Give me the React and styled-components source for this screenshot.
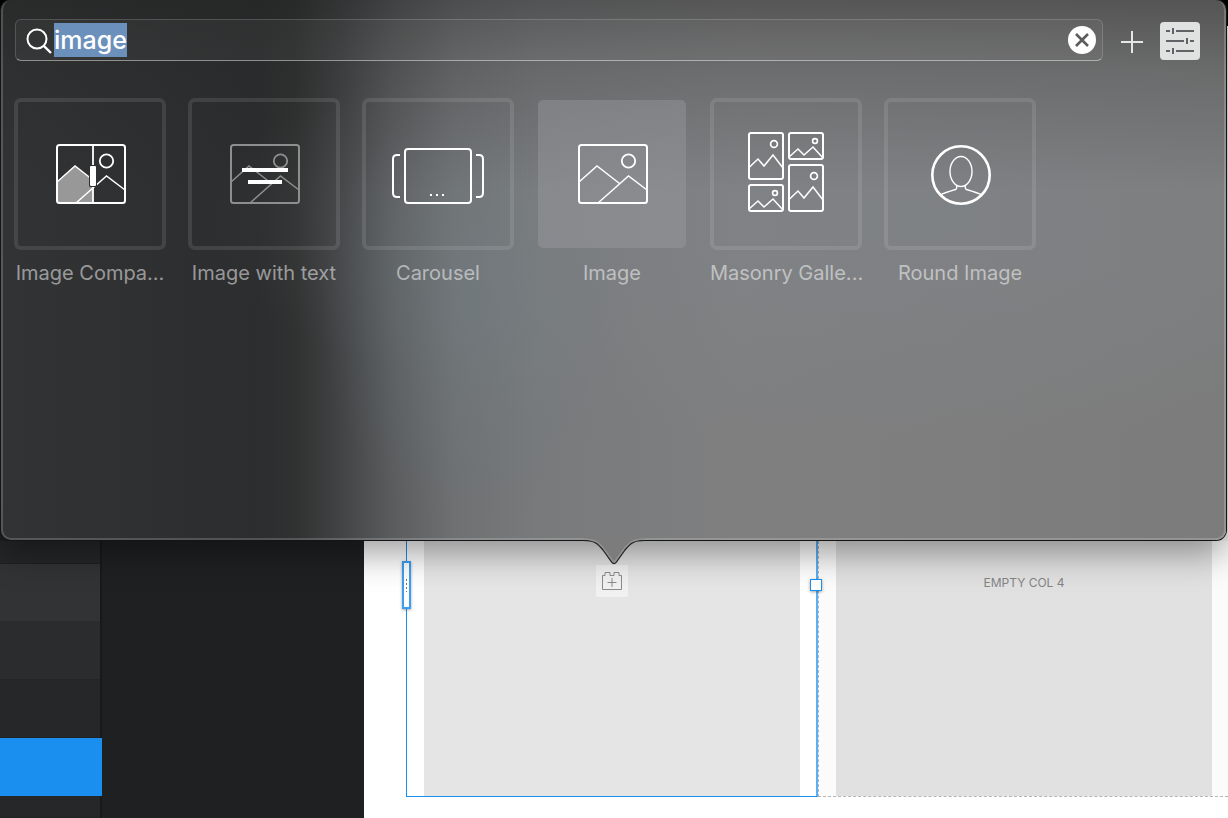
import React, { useEffect, useRef, useState } from "react";
import styled, { createGlobalStyle, css } from "styled-components";

const elements = [
  { id: "compare", label: "Image Compa...", icon: CompareIcon },
  { id: "text", label: "Image with text", icon: TextImageIcon },
  { id: "carousel", label: "Carousel", icon: CarouselIcon },
  { id: "image", label: "Image", icon: ImageIcon },
  { id: "masonry", label: "Masonry Galle...", icon: MasonryIcon },
  { id: "round", label: "Round Image", icon: RoundIcon },
];

function App() {
  const [query, setQuery] = useState("image");
  const [active, setActive] = useState("image");
  const input = useRef(null);

  // start with the query selected so typing replaces it
  useEffect(() => {
    input.current.focus();
    input.current.select();
  }, []);

  return (
    <Page>
      <GlobalStyle />
      <Popover>
        <Toolbar>
          <SearchBox>
            <SearchIcon />
            <SearchInput
              ref={input}
              type="text"
              aria-label="Search elements"
              value={query}
              onChange={(e) => setQuery(e.target.value)}
            />
            <ClearButton type="button" aria-label="Clear search" onClick={() => setQuery("")}>
              <svg width="14" height="14" viewBox="0 0 14 14" fill="none" stroke="#5c5c5c" strokeWidth="2.6">
                <path d="M1 1 L13 13 M13 1 L1 13" />
              </svg>
            </ClearButton>
          </SearchBox>
          <AddButton type="button" aria-label="Add element">
            <svg width="22" height="22" viewBox="0 0 22 22" fill="none" stroke="#e6e6e6" strokeWidth="2">
              <path d="M11 0 V22 M0 11 H22" />
            </svg>
          </AddButton>
          <SettingsButton type="button" aria-label="Settings">
            <SlidersIcon />
          </SettingsButton>
        </Toolbar>

        <ElementGrid>
          {elements.map(({ id, label, icon: Icon }) => (
            <ElementButton key={id} type="button" onClick={() => setActive(id)}>
              <Tile $active={active === id}>
                <Icon />
              </Tile>
              <Label>{label}</Label>
            </ElementButton>
          ))}
        </ElementGrid>

        <Pointer width="62" height="28" viewBox="0 0 62 28">
          <path d="M0 0 H62 V2 C50 2 47 6 42 12 L34 24 Q31 27 28 24 L20 12 C15 6 12 2 0 2 Z" fill="#7c7c7c" />
          <path d="M0 1 C13 1 16 5 21 11 L29 22 Q31 25 33 22 L41 11 C46 5 49 1 62 1" fill="none" stroke="#929391" strokeWidth="1.5" />
          <path d="M0 2.5 C12 2.5 15 6 20 12 L28.5 24 Q31 27.5 33.5 24 L42 12 C47 6 50 2.5 62 2.5" fill="none" stroke="#222" strokeWidth="1.2" />
        </Pointer>
      </Popover>

      <Workspace>
        <Sidebar>
          <SideRow $size="short" $tone="#252628" />
          <SideRow $tone="#323335" />
          <SideRow $tone="#2b2c2e" />
          <SideRow $tone="#262729" />
          <SideRow $tone="#1b8ff0" $selected />
          <SideRow $size="rest" $tone="#262729" />
        </Sidebar>
        <Inspector />
        <Canvas>
          <SelectedColumn>
            <DragHandle />
            <ColumnBody>
              <BrickButton type="button" aria-label="Add element to column">
                <BrickIcon />
              </BrickButton>
            </ColumnBody>
            <ResizeHandle />
          </SelectedColumn>
          <EmptyColumn>
            <ColumnBody $empty>
              <EmptyText>EMPTY COL 4</EmptyText>
            </ColumnBody>
          </EmptyColumn>
        </Canvas>
      </Workspace>
    </Page>
  );
}

// Icons
function SearchIcon() {
  return (
    <svg width="29" height="28" viewBox="0 -1 29 28" fill="none" stroke="#fff" strokeWidth="2">
      <circle cx="12" cy="12" r="9.5" />
      <path d="M18.8 18.8 L26 26" strokeWidth="2.4" />
    </svg>
  );
}

function SlidersIcon() {
  return (
    <svg width="28" height="26" viewBox="0 0 28 26" fill="none" stroke="#606365" strokeWidth="2">
      <path d="M0 3 H4 M7 0 V6 M10 3 H28" />
      <path d="M0 13 H18 M21 10 V16 M24 13 H28" />
      <path d="M0 23 H4 M7 20 V26 M10 23 H28" />
    </svg>
  );
}

function Landscape() {
  return (
    <>
      <rect x="1" y="1" width="68" height="58" rx="2.5" strokeWidth="2" />
      <circle cx="50.5" cy="17" r="6.7" strokeWidth="1.8" />
      <path d="M1 38 L19 22 L41.5 39.5 M20 59 L50.5 32 L69 46" strokeWidth="1.5" />
    </>
  );
}

function ImageIcon() {
  return (
    <svg width="72" height="60" viewBox="-2 0 72 60" fill="none" stroke="#fff">
      <Landscape />
    </svg>
  );
}

function CompareIcon() {
  return (
    <svg width="72" height="60" viewBox="-2 0 72 60" fill="none" stroke="#fff">
      <path d="M1 38 L19 22 L37 36 V59 H1 Z" fill="#989898" stroke="none" />
      <rect x="1" y="1" width="68" height="58" rx="2.5" strokeWidth="2" />
      <circle cx="50.5" cy="17" r="6.7" strokeWidth="1.8" />
      <path d="M1 38 L19 22 L37 36 M20 59 L50.5 32 L69 46" strokeWidth="1.5" />
      <path d="M37 1 V59" strokeWidth="1.8" />
      <rect x="33" y="21" width="8" height="22" rx="1.5" fill="#2f3031" stroke="none" />
      <rect x="34" y="22" width="6" height="20" rx="1" fill="#fff" stroke="none" />
    </svg>
  );
}

function TextImageIcon() {
  return (
    <svg width="72" height="60" viewBox="-2 0 72 60" fill="none">
      <g stroke="#8e8e8f">
        <Landscape />
      </g>
      <path d="M12 26 H58 M18 38 H52" stroke="#fff" strokeWidth="4" />
    </svg>
  );
}

function CarouselIcon() {
  return (
    <svg width="92" height="60" viewBox="0 -4 92 60" fill="none" stroke="#fff" strokeWidth="2">
      <rect x="13" y="1" width="66" height="54" rx="3" />
      <path d="M8 7 H5 Q1 7 1 11 V45 Q1 49 5 49 H8 M84 7 H87 Q91 7 91 11 V45 Q91 49 87 49 H84" />
      <path d="M38 47 H40 M44 47 H46 M50 47 H52" />
    </svg>
  );
}

function MasonryIcon() {
  return (
    <svg width="76" height="84" viewBox="0 0 76 84" fill="none" stroke="#fff" strokeWidth="2">
      <rect x="1" y="1" width="34" height="46" rx="2" />
      <rect x="41" y="1" width="34" height="26" rx="2" />
      <rect x="41" y="33" width="34" height="46" rx="2" />
      <rect x="1" y="53" width="34" height="26" rx="2" />
      <g strokeWidth="1.7">
        <circle cx="26" cy="12" r="3.4" />
        <circle cx="67" cy="9" r="2.4" />
        <circle cx="66" cy="44" r="3.4" />
        <circle cx="27" cy="61" r="2.4" />
      </g>
      <g strokeWidth="1.5">
        <path d="M1 35.5 L10 27 L16 34 L25 23 L35 36" />
        <path d="M41 25 L50 17 L56 23 L65 15 L75 26" />
        <path d="M41 67.5 L50 59 L56 66 L65 55 L75 68" />
        <path d="M1 77 L10 69 L16 75 L25 67 L35 78" />
      </g>
    </svg>
  );
}

function RoundIcon() {
  return (
    <svg width="62" height="62" viewBox="-2 -2 62 62" fill="none" stroke="#fff">
      <circle cx="30" cy="30" r="28.7" strokeWidth="2.6" />
      <ellipse cx="30" cy="26.5" rx="11" ry="15" strokeWidth="1.4" />
      <path d="M10 49.5 Q13 48 24.5 44.5 Q26.5 43.5 25.5 40 M50 49.5 Q47 48 35.5 44.5 Q33.5 43.5 34.5 40" strokeWidth="1.4" />
    </svg>
  );
}

function BrickIcon() {
  return (
    <svg width="20" height="18" viewBox="0 0 20 18" fill="none" stroke="#8b8b8b">
      <path d="M0.5 17.5 V3.5 H3 V0.5 H8 V3.5 H12 V0.5 H17 V3.5 H19.5 V17.5 Z" />
      <path d="M10 6 V15 M5.5 10.5 H14.5" />
    </svg>
  );
}

// Style
const GlobalStyle = createGlobalStyle`
  * {
    box-sizing: border-box;
  }

  body {
    margin: 0;
    font-family: Inter, "Liberation Sans", sans-serif;
  }

  button {
    padding: 0;
    border: none;
    background: none;
    font: inherit;
    cursor: pointer;
  }

  svg {
    display: block;
    flex-shrink: 0;
  }
`;

const Page = styled.div`
  min-height: 100vh;
  display: flex;
  flex-direction: column;
  overflow: hidden;
  background:
    linear-gradient(#000 26px, transparent 26px),
    linear-gradient(90deg, #1f2022 50%, #f0f0f0 50%);
`;

const Popover = styled.section`
  position: relative;
  z-index: 1;
  min-height: 540px;
  margin: 0 2px 1px 1px;
  border: 2px solid rgba(255, 255, 255, 0.18);
  border-top: none;
  border-radius: 10px;
  background:
    linear-gradient(rgba(30, 30, 30, 0.42), rgba(35, 35, 35, 0.2) 70px, transparent 190px),
    radial-gradient(ellipse 150px 220px at 470px 310px, rgba(112, 126, 134, 0.35), rgba(112, 126, 134, 0.15) 60%, transparent),
    radial-gradient(ellipse 700px 220px at 900px 220px, rgba(128, 136, 142, 0.4), transparent),
    linear-gradient(90deg, #323334, #2c2d2e 21%, #303131 24%, #434546 28%, #5a5c5d 32%, #6e7071 37%, #787a7b 44%, #7f7f80 60%, #7c7c7c);
  background-origin: border-box;
  box-shadow: 0 0 0 1px #151515, 0 12px 36px rgba(0, 0, 0, 0.4);
`;

const Toolbar = styled.header`
  display: flex;
  align-items: center;
  padding: 19px 24px 0 12px;
`;

const SearchBox = styled.div`
  flex: 1;
  height: 42px;
  display: flex;
  align-items: center;
  padding: 0 6px 0 9px;
  border: 1px solid rgba(255, 255, 255, 0.16);
  border-bottom-color: rgba(255, 255, 255, 0.45);
  border-radius: 6px;
  background: rgba(255, 255, 255, 0.04);
`;

const SearchInput = styled.input`
  flex: 1;
  min-width: 0;
  height: 34px;
  padding: 0;
  border: none;
  outline: none;
  background: none;
  color: #fff;
  font-family: inherit;
  font-size: 25px;
  font-weight: 500;
  line-height: 34px;

  &::selection {
    background: #6b90bb;
    color: #fff;
  }
`;

const ClearButton = styled.button`
  width: 28px;
  height: 28px;
  display: grid;
  place-items: center;
  border-radius: 50%;
  background: #fff;
`;

const AddButton = styled.button`
  margin: 4px 17px 0 18px;
`;

const SettingsButton = styled.button`
  width: 40px;
  height: 38px;
  display: grid;
  place-items: center;
  margin-top: 2px;
  border-radius: 4px;
  background: #e0e1e1;
`;

const ElementGrid = styled.div`
  display: grid;
  grid-template-columns: repeat(auto-fill, 152px);
  gap: 22px;
  padding: 37px 11px 24px;
`;

const ElementButton = styled.button`
  display: flex;
  flex-direction: column;
  gap: 9px;
  color: rgba(255, 255, 255, 0.52);
`;

const Tile = styled.span`
  width: 152px;
  height: 152px;
  display: grid;
  place-items: center;
  border: 4px solid rgba(255, 255, 255, 0.1);
  border-radius: 7px;

  ${(props) => props.$active && css`
    border: 2px solid transparent;
    background: rgba(158, 158, 162, 0.4) padding-box;
  `}
`;

const Label = styled.span`
  width: 100%;
  font-size: 20px;
  line-height: 28px;
  text-align: center;
  white-space: nowrap;
`;

const Pointer = styled.svg`
  position: absolute;
  top: 100%;
  left: 50%;
  transform: translateX(-50%);
`;

const Workspace = styled.main`
  flex: 1;
  display: flex;
`;

const Sidebar = styled.div`
  width: 102px;
  display: flex;
  flex-direction: column;
  background: #18191a;
`;

const SideRow = styled.div`
  height: ${(props) => (props.$size === "short" ? "23px" : "58px")};
  margin-right: ${(props) => (props.$selected ? "0" : "2px")};
  border-bottom: 1px solid rgba(0, 0, 0, ${(props) => (props.$selected ? "0" : "0.15")});
  background: ${(props) => props.$tone};
  ${(props) => props.$size === "rest" && "flex: 1;"}
`;

const Inspector = styled.div`
  width: 262px;
  background: #1f2022;
`;

const Canvas = styled.div`
  flex: 1;
  display: grid;
  grid-template-columns: calc(50% + 1px) 1fr;
  padding: 0 0 21px 42px;
  background: #fff;
`;

const SelectedColumn = styled.div`
  position: relative;
  display: flex;
  padding: 0 16px 0 17px;
  border: solid #1b8ff0;
  border-width: 0 2px 1px 1px;
  border-right-color: #5aaff5;
`;

const EmptyColumn = styled.div`
  display: flex;
  padding: 0 16px 0 17px;
  border: 1px dashed #b5b5b5;
  border-width: 0 0 1px 1px;
  background: #fbfbfb;
`;

const ColumnBody = styled.div`
  flex: 1;
  display: flex;
  justify-content: center;
  align-items: flex-start;
  padding-top: ${(props) => (props.$empty ? "34px" : "24px")};
  background: ${(props) => (props.$empty ? "#e1e1e1" : "#e5e5e5")};
`;

const BrickButton = styled.button`
  width: 32px;
  height: 32px;
  display: grid;
  place-items: center;
  border-radius: 2px;
  background: #f1f1f1;
`;

const EmptyText = styled.span`
  color: #848484;
  font-size: 12px;
  line-height: 16px;
`;

const DragHandle = styled.span`
  position: absolute;
  top: 20px;
  left: -5px;
  width: 9px;
  height: 48px;
  border: 2px solid #3a9ff3;
  background: #fff;
  box-shadow: 0 1px 3px rgba(0, 0, 0, 0.35);

  &::after {
    content: "";
    display: block;
    width: 1px;
    height: 13px;
    margin: 16px auto 0;
    background: repeating-linear-gradient(#777 0 2px, transparent 2px 4px);
  }
`;

const ResizeHandle = styled.span`
  position: absolute;
  top: 38px;
  right: -6px;
  width: 12px;
  height: 12px;
  border: 1px solid #1b8ff0;
  background: #fff;
  box-shadow: 0 1px 3px rgba(0, 0, 0, 0.35);
`;

export default App;
